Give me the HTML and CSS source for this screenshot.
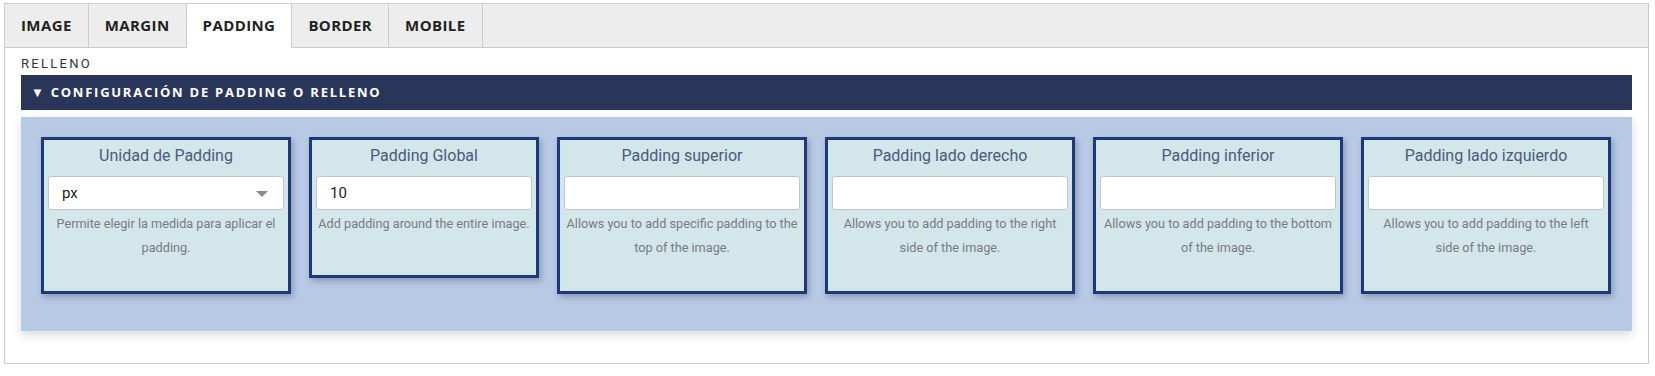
FILE: index.html
```html
<!DOCTYPE html>
<html lang="es">
<head>
  <meta charset="UTF-8">
  <title>Padding</title>
  <meta name="viewport" content="width=device-width, initial-scale=1.0">
  <link rel="stylesheet" href="styles.css">
</head>
<body>
  <div class="box">
    <div class="tabs">
      <div class="tab">Image</div>
      <div class="tab">Margin</div>
      <div class="tab active">Padding</div>
      <div class="tab">Border</div>
      <div class="tab">Mobile</div>
    </div>

    <div class="pane">
      <div class="section-label">Relleno</div>
      <div class="section-head">▼ Configuración de padding o relleno</div>

      <div class="fields">
        <div class="field">
          <label class="field-title">Unidad de Padding</label>
          <div class="select-wrap">
            <select>
              <option>px</option>
              <option>%</option>
              <option>em</option>
            </select>
          </div>
          <p class="help">Permite elegir la medida para aplicar el padding.</p>
        </div>

        <div class="field narrow">
          <label class="field-title">Padding Global</label>
          <input type="text" value="10">
          <p class="help">Add padding around the entire image.</p>
        </div>

        <div class="field">
          <label class="field-title">Padding superior</label>
          <input type="text">
          <p class="help">Allows you to add specific padding to the top of the image.</p>
        </div>

        <div class="field">
          <label class="field-title">Padding lado derecho</label>
          <input type="text">
          <p class="help">Allows you to add padding to the right side&nbsp;of the image.</p>
        </div>

        <div class="field">
          <label class="field-title">Padding inferior</label>
          <input type="text">
          <p class="help">Allows you to add padding to the bottom of the image.</p>
        </div>

        <div class="field">
          <label class="field-title">Padding lado izquierdo</label>
          <input type="text">
          <p class="help">Allows you to add padding to the left side&nbsp;of the image.</p>
        </div>
      </div>
    </div>
  </div>
</body>
</html>
```

FILE: styles.css
```css
body { margin: 0; font-family: Roboto, "Liberation Sans", sans-serif; background: #fff; color: #333; }
.box { margin: 3px 6px 0 4px; border: 1px solid #ccc; }

.tabs { display: flex; height: 43px; background: #ededed; border-bottom: 1px solid #ccc; }
.tab { padding: 0 16px; line-height: 43px; font-family: "Open Sans", sans-serif; font-size: 15px; font-weight: 700; letter-spacing: 0.4px; color: #222; text-transform: uppercase; border-right: 1px solid #ccc; }
.tab.active { background: #fff; height: 44px; }

.pane { padding: 8px 16px 32px; }
.section-label { font-size: 13px; line-height: 16px; letter-spacing: 2.3px; text-transform: uppercase; color: #333; margin-bottom: 3px; }
.section-head { height: 35px; line-height: 35px; padding-left: 10px; margin-bottom: 7px; background: #29365a; color: #fff; font-family: "Open Sans", sans-serif; font-size: 13px; font-weight: 700; letter-spacing: 1.75px; text-transform: uppercase; }

.fields { display: flex; align-items: flex-start; gap: 18px; padding: 20px 20px 37px; background: #b8c9e6; box-shadow: 0 4px 10px rgba(0,0,0,0.15); }
.field { box-sizing: border-box; width: 250px; min-height: 141px; padding: 4px 4px 31px; border: 3px solid #1b3a79; background: #d3e6ea; text-align: center; box-shadow: 2px 3px 6px rgba(0,0,0,0.25); }
.field.narrow { width: 230px; }
.field-title { display: block; font-size: 16px; line-height: 24px; color: #4a5b7e; margin-bottom: 8px; }

.select-wrap { position: relative; }
.select-wrap::after { content: ""; position: absolute; right: 16px; top: 15px; border-left: 6px solid transparent; border-right: 6px solid transparent; border-top: 6px solid #8a8a8a; pointer-events: none; }
select, input[type="text"] {
  display: block;
  box-sizing: border-box;
  width: 100%;
  height: 34px;
  padding: 0 13px;
  border: 1px solid #c6c6c6;
  border-radius: 3px;
  background: #fff;
  font-family: inherit;
  font-size: 15px;
  color: #222;
  appearance: none;
}
.help { margin: 2px 0 0; font-size: 12.7px; line-height: 24px; color: #777b80; }
```
